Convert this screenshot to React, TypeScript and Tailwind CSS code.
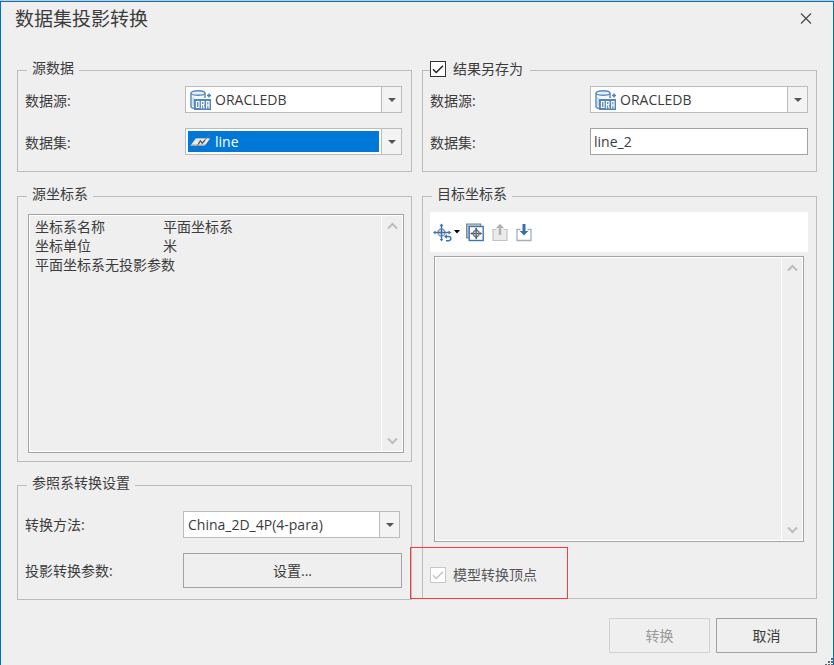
import { useState, type ReactNode } from "react";

const FONT = "font-['Open_Sans','Noto_Sans_CJK_SC',sans-serif]";

function OracleIcon() {
  return (
    <svg width="21" height="20" viewBox="0 0 21 20" className="shrink-0" aria-hidden="true">
      <path d="M1 3v13.500c0 1 1.500 1.700 3 2V9h11V3z" fill="#f4f8fc" />
      <path d="M1 3v13.500c0 1 1.500 1.700 3.500 2M15 3v5" fill="none" stroke="#5a8cbf" strokeWidth="1.500" />
      <ellipse cx="8" cy="3" rx="7" ry="2.300" fill="#e4eef7" stroke="#5a8cbf" strokeWidth="1.400" />
      <path d="M3.200 7.500v8.500" stroke="#b8d0e6" strokeWidth="1.500" />
      <path d="M19 3.500v4M17 5.500h4" stroke="#4a7fb8" strokeWidth="1.500" />
      <rect x="4" y="9" width="17" height="11" fill="#5586b8" />
      <path
        d="M6.500 11.500h2.500v6H6.500zM11.500 18.500v-7h2.500v3h-2M13 14.500l1.300 4M16.700 18.500v-7h2.300v7M16.700 15.200h2.300"
        fill="none"
        stroke="#fff"
        strokeWidth="1.200"
      />
    </svg>
  );
}

function LineDatasetIcon() {
  return (
    <svg width="21" height="16" viewBox="0 0 21 16" className="shrink-0" aria-hidden="true">
      <path d="M0 12l5.500-7.500H20L14.500 12z" fill="#a7a7a4" />
      <path d="M1.500 10.500l4.500-6h14L15.500 10.500z" fill="#eceae6" />
      <path d="M4 15.500l4.500-5.500 1.800-3.200 2 2.400L19.500.5" fill="none" stroke="#6e7681" strokeWidth="0.900" />
      <path d="M8.500 10l1.800-3.200 2 2.400L15 6" fill="none" stroke="#4e5863" strokeWidth="1.200" />
    </svg>
  );
}

function DropArrow() {
  return (
    <span className="pointer-events-none flex w-5 shrink-0 items-center justify-center border-l border-[#bcbcbc] bg-[#f3f3f3]">
      <svg width="8" height="4" viewBox="0 0 8 4" aria-hidden="true">
        <path d="M0 0h8L4 4z" fill="#555" />
      </svg>
    </span>
  );
}

type ComboProps = { id: string; value: string; icon?: ReactNode; active?: boolean; className?: string };

function Combo({ id, value, icon, active = false, className = "" }: ComboProps) {
  return (
    <div className={`flex h-[27px] min-w-0 flex-1 border border-[#bcbcbc] bg-white ${className}`}>
      <div className={`m-0.5 flex min-w-0 flex-1 items-center gap-1 pl-0.5 ${active ? "bg-[#0078d7] text-white" : ""}`}>
        {icon}
        <select id={id} className="min-w-0 flex-1 appearance-none bg-transparent outline-none">
          <option>{value}</option>
        </select>
      </div>
      <DropArrow />
    </div>
  );
}

function Row({ id, label, children }: { id: string; label: string; children: ReactNode }) {
  return (
    <div className="flex items-end">
      <label htmlFor={id} className="w-40 shrink-0 leading-6">
        {label}
      </label>
      {children}
    </div>
  );
}

type CheckBoxProps = { id: string; checked: boolean; onChange?: (v: boolean) => void; disabled?: boolean };

function CheckBox({ id, checked, onChange, disabled = false }: CheckBoxProps) {
  return (
    <span className="grid size-4 shrink-0">
      <input
        id={id}
        type="checkbox"
        checked={checked}
        disabled={disabled}
        onChange={(e) => onChange?.(e.target.checked)}
        className="col-start-1 row-start-1 size-4 appearance-none border border-[#333] bg-white disabled:border-[#c8c8c8]"
      />
      {checked && (
        <svg viewBox="0 0 16 16" className="pointer-events-none col-start-1 row-start-1 size-4" aria-hidden="true">
          <path d="M3 8.300l3.200 3.200L13 4.700" fill="none" stroke={disabled ? "#c4c4c4" : "#222"} strokeWidth="1.500" />
        </svg>
      )}
    </span>
  );
}

function Group({ legend, className = "", children }: { legend: string; className?: string; children: ReactNode }) {
  return (
    <fieldset className={`min-w-0 border border-[#bcbcbc] pl-[7px] ${className}`}>
      <legend className="ml-0.5 px-[5px] pb-1 leading-4">{legend}</legend>
      {children}
    </fieldset>
  );
}

function Chevron({ up = false }: { up?: boolean }) {
  return (
    <svg width="11" height="8" viewBox="0 0 11 8" aria-hidden="true">
      <path d={up ? "M1 6.500l4.500-4.500L10 6.500" : "M1 1.500l4.500 4.500L10 1.500"} fill="none" stroke="#bdbdbd" strokeWidth="2" />
    </svg>
  );
}

function InfoBox({ className = "", children }: { className?: string; children?: ReactNode }) {
  return (
    <div className={`flex flex-col border border-[#a3a3a3] ${className}`}>
      <div className="flex flex-1 border border-white">
        <div className="min-w-0 flex-1 px-[5px] pt-px">{children}</div>
        <div className="flex w-[21px] shrink-0 flex-col items-center justify-between border-l border-white py-1.5">
          <Chevron up />
          <Chevron />
        </div>
      </div>
    </div>
  );
}

function SetCoordIcon() {
  return (
    <svg width="19" height="19" viewBox="0 0 19 19" aria-hidden="true">
      <circle cx="8.500" cy="9.500" r="3.500" fill="#dfe3e8" stroke="#8a96a3" strokeWidth="1.300" />
      <path d="M8.500 1v15.500M1 9.500h16" stroke="#3a74b0" strokeWidth="1.400" />
      <path d="M6.500 3.200L8.500.5l2 2.700zM15.500 7.500l2.700 2-2.700 2zM0 9.500l2.500-1.700v3.400zM8.500 18.500l-1.700-2.500h3.400z" fill="#3a74b0" />
      <path d="M12.500 13.500h3.300a2.100 2.100 0 0 1 0 4.200H13" fill="none" stroke="#3a74b0" strokeWidth="1.400" />
      <path d="M14 11.300v4.400l-3-2.200z" fill="#3a74b0" />
    </svg>
  );
}

function CopyCoordIcon() {
  return (
    <svg width="18" height="19" viewBox="0 0 18 19" aria-hidden="true">
      <path d="M.7 1h14v3H4v11H.7z" fill="#c3cbd3" stroke="#75818f" strokeWidth="1.200" />
      <rect x="3.200" y="3.500" width="14" height="14" fill="#fff" stroke="#3a78b4" strokeWidth="1.400" />
      <circle cx="10.200" cy="10.500" r="3" fill="#d5d9de" stroke="#75818f" strokeWidth="1.400" />
      <path d="M10.200 5v11M4.700 10.500h11" stroke="#566373" strokeWidth="1.200" />
      <path d="M8.700 6.700l1.500-2.200 1.500 2.200zM8.700 14.300l1.500 2.200 1.500-2.200zM6.400 9l-2.200 1.500 2.200 1.500zM14 9l2.200 1.500L14 12z" fill="#566373" />
    </svg>
  );
}

function ExportIcon() {
  return (
    <svg width="16" height="19" viewBox="0 0 16 19" aria-hidden="true">
      <path d="M4.500 6.500H1v11h14v-11h-3.500" fill="#ebebeb" stroke="#c3c3c3" strokeWidth="1.200" />
      <path d="M3.800 5.200L8 .8l4.200 4.400H9.300V12H6.700V5.200z" fill="#b2b2b2" />
    </svg>
  );
}

function ImportIcon() {
  return (
    <svg width="16" height="19" viewBox="0 0 16 19" aria-hidden="true">
      <path d="M4.500 6.500H1v11h14v-11h-3.500" fill="#fff" stroke="#a5afb9" strokeWidth="1.300" />
      <path d="M6.500 1h3v7h2.800L8 12.500 3.700 8h2.800z" fill="#3570ae" />
    </svg>
  );
}

export default function App() {
  const [saveAs, setSaveAs] = useState(true);
  const [target, setTarget] = useState("line_2");

  return (
    <div className={`flex min-h-screen flex-col bg-[#c9c9c6] pt-px text-sm text-[#3c3c3c] ${FONT}`}>
      <main className="relative flex flex-1 flex-col border-x border-t border-[#0072c6] bg-[#efefef] px-4">
        <header className="-ml-0.5 flex h-[34px] items-center justify-between pr-[5px]">
          <h1 className="text-[19px] leading-7">数据集投影转换</h1>
          <button type="button" aria-label="关闭" className="flex size-3 items-center justify-center">
            <svg width="12" height="12" viewBox="0 0 12 12" aria-hidden="true">
              <path d="M1 .5l10 10M11 .5l-10 10" stroke="#444" strokeWidth="1.100" />
            </svg>
          </button>
        </header>

        <div className="mt-6 grid grid-cols-2 gap-[10px]">
          <div className="flex flex-col">
            <Group legend="源数据" className="flex flex-col gap-[15px] pt-1.5 pr-[9px] pb-4">
              <Row id="src-source" label="数据源:">
                <Combo id="src-source" value="ORACLEDB" icon={<OracleIcon />} />
              </Row>
              <Row id="src-dataset" label="数据集:">
                <Combo id="src-dataset" value="line" active icon={<LineDatasetIcon />} />
              </Row>
            </Group>

            <Group legend="源坐标系" className="mt-[14px] pt-2 pr-[7px] pb-2">
              <InfoBox className="ml-[3px] h-[239px]">
                <dl className="grid grid-cols-[128px_1fr] leading-[19px]">
                  <dt>坐标系名称</dt>
                  <dd>平面坐标系</dd>
                  <dt>坐标单位</dt>
                  <dd>米</dd>
                </dl>
                <p className="leading-[19px]">平面坐标系无投影参数</p>
              </InfoBox>
            </Group>

            <Group legend="参照系转换设置" className="mt-[13px] flex flex-col gap-[15px] pt-4 pr-[9px] pb-[11px]">
              <div className="flex items-center">
                <label htmlFor="method" className="w-[158px] shrink-0">
                  转换方法:
                </label>
                <Combo id="method" value="China_2D_4P(4-para)" className="mr-0.5" />
              </div>
              <div className="flex items-center">
                <label htmlFor="params" className="w-[158px] shrink-0">
                  投影转换参数:
                </label>
                <button id="params" type="button" className="h-[35px] flex-1 border border-[#a3a3a3]">
                  设置...
                </button>
              </div>
            </Group>
          </div>

          <div className="flex flex-col pb-px">
            <fieldset className="flex min-w-0 flex-col gap-[15px] border border-[#bcbcbc] pt-1.5 pr-2 pb-4 pl-[7px]">
              <legend className="flex items-center gap-[7px] pr-[7px] pb-0.5 leading-[18px]">
                <CheckBox id="save-as" checked={saveAs} onChange={setSaveAs} />
                <label htmlFor="save-as">结果另存为</label>
              </legend>
              <Row id="dst-source" label="数据源:">
                <Combo id="dst-source" value="ORACLEDB" icon={<OracleIcon />} />
              </Row>
              <Row id="dst-dataset" label="数据集:">
                <input
                  id="dst-dataset"
                  type="text"
                  value={target}
                  onChange={(e) => setTarget(e.target.value)}
                  className="h-[27px] min-w-0 flex-1 border border-[#a3a3a3] bg-white px-[3px] outline-none"
                />
              </Row>
            </fieldset>

            <Group legend="目标坐标系" className="mt-[14px] flex flex-1 flex-col pt-1.5 pr-2">
              <div className="flex h-10 items-center bg-white pl-[3px]">
                <button type="button" aria-label="设置坐标系" className="flex items-center gap-0.5">
                  <SetCoordIcon />
                  <svg width="6" height="4" viewBox="0 0 6 4" aria-hidden="true">
                    <path d="M0 0h6L3 3.500z" fill="#000" />
                  </svg>
                </button>
                <button type="button" aria-label="复制坐标系" className="ml-1.5">
                  <CopyCoordIcon />
                </button>
                <button type="button" aria-label="导出" disabled className="ml-2">
                  <ExportIcon />
                </button>
                <button type="button" aria-label="导入" className="ml-2">
                  <ImportIcon />
                </button>
              </div>
              <InfoBox className="mx-1 mt-1 flex-1" />
              <div className="relative mt-[5px] flex h-[51px] items-center gap-[7px] pt-1">
                <CheckBox id="model-vertex" checked disabled />
                <label htmlFor="model-vertex" className="text-[#555]">
                  模型转换顶点
                </label>
                <div className="pointer-events-none absolute top-0 -bottom-px -left-5 w-[158px] border border-[#fb3b3b]" />
              </div>
            </Group>
          </div>
        </div>

        <footer className="mt-[18px] flex justify-end gap-1.5 pb-3">
          <button type="button" disabled className="h-[35px] w-[101px] border border-[#d2d2d2] text-[#999]">
            转换
          </button>
          <button type="button" className="h-[35px] w-[101px] border border-[#a3a3a3]">
            取消
          </button>
        </footer>

        <svg width="8" height="7" viewBox="0 0 8 7" className="absolute right-0 bottom-0" aria-hidden="true">
          <path d="M6 0h2v2H6zM6 3h2v2H6zM3 3h2v2H3zM6 6h2v1H6zM3 6h2v1H3zM0 6h2v1H0z" fill="#666" />
        </svg>
      </main>
    </div>
  );
}
